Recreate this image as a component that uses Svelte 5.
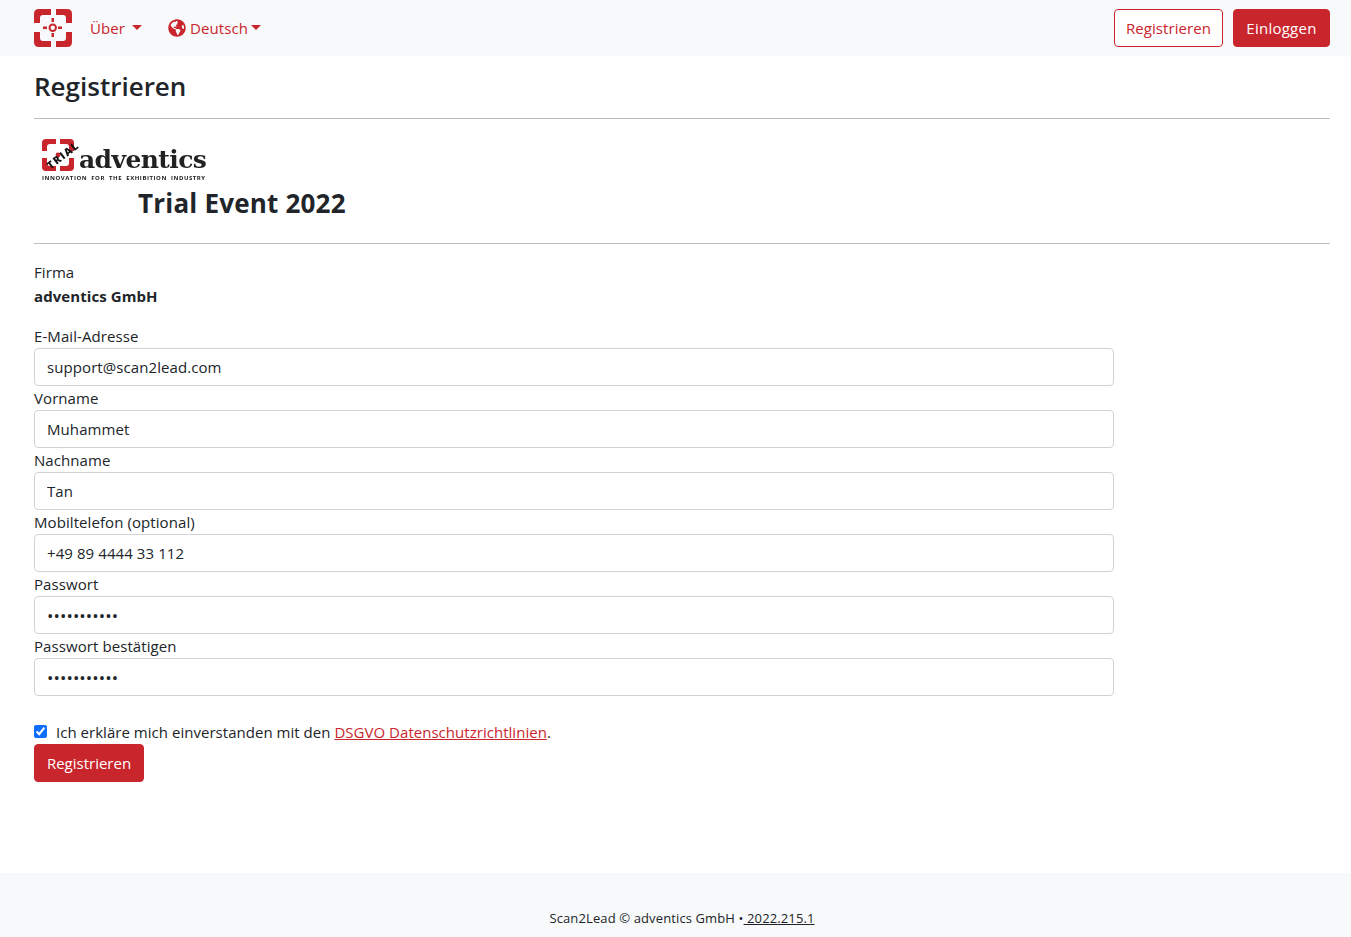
<script>
  const fields = [
    { label: 'E-Mail-Adresse', value: 'support@scan2lead.com', type: 'text' },
    { label: 'Vorname', value: 'Muhammet', type: 'text' },
    { label: 'Nachname', value: 'Tan', type: 'text' },
    { label: 'Mobiltelefon (optional)', value: '+49 89 4444 33 112', type: 'text' },
    { label: 'Passwort', value: 'password123', type: 'password' },
    { label: 'Passwort bestätigen', value: 'password123', type: 'password' }
  ];
</script>

<div class="page">
  <nav class="navbar">
    <div class="nav-left">
      <svg class="brand" viewBox="0 0 38 38" aria-hidden="true">
        <g fill="#c9252d">
          <path d="M5 0H17V6H9Q6 6 6 9V14H0V5Q0 0 5 0Z" />
          <path d="M22 0H33Q38 0 38 5V14H32V9Q32 6 29 6H22Z" />
          <path d="M0 23H6V29Q6 32 9 32H17V38H5Q0 38 0 33Z" />
          <path d="M32 23H38V33Q38 38 33 38H22V32H29Q32 32 32 29Z" />
          <rect x="17.5" y="9" width="2.5" height="4" />
          <rect x="17.5" y="24" width="2.5" height="4" />
          <rect x="9" y="17.5" width="4" height="2.5" />
          <rect x="24" y="17.5" width="4" height="2.5" />
        </g>
        <circle cx="18.75" cy="18.75" r="3.2" fill="none" stroke="#c9252d" stroke-width="2" />
      </svg>
      <a class="nav-link first" href="#a">Über<span class="caret wide"></span></a>
      <a class="nav-link lang" href="#b">
        <svg class="globe" viewBox="0 0 496 512" aria-hidden="true">
          <path fill="#c9252d" d="M248 8C111.03 8 0 119.03 0 256s111.03 248 248 248 248-111.03 248-248S384.97 8 248 8zm82.29 357.6c-3.9 3.88-7.99 7.95-11.31 11.28-2.99 3-5.1 6.7-6.17 10.71-1.51 5.66-2.73 11.38-4.77 16.87l-17.39 46.85c-13.76 3-28 4.69-42.65 4.69v-27.38c1.69-12.62-7.64-36.26-22.63-51.25-6-6-9.37-14.14-9.37-22.63v-32.01c0-11.64-6.27-22.34-16.46-27.97-14.37-7.95-34.81-19.06-48.81-26.11-11.48-5.78-22.1-13.14-31.65-21.75l-.8-.72a114.792 114.792 0 0 1-18.06-20.74c-9.38-13.77-24.66-36.42-34.59-51.14 20.47-45.5 57.36-82.04 103.2-101.89l24.01 12.01C203.48 89.74 216 82.01 216 70.11v-11.3c7.99-1.29 16.12-2.11 24.42-2.43l28.3 28.3c6.25 6.25 6.25 16.38 0 22.63L264 112l-10.34 10.34c-3.12 3.12-3.12 8.19 0 11.31l4.69 4.69c3.12 3.12 3.12 8.19 0 11.31l-8 8a8.008 8.008 0 0 1-5.66 2.34h-8.99c-2.08 0-4.08.81-5.58 2.27l-9.92 9.65a8.008 8.008 0 0 0-1.58 9.31l15.59 31.19c2.66 5.32-1.21 11.58-7.15 11.58h-5.64c-1.93 0-3.79-.7-5.24-1.96l-9.28-8.06a16.017 16.017 0 0 0-15.55-3.1l-31.17 10.39a11.95 11.95 0 0 0-8.17 11.34c0 4.53 2.56 8.66 6.61 10.69l11.08 5.54c9.41 4.71 19.79 7.16 30.31 7.16s22.59 27.29 32 32h66.75c8.49 0 16.62 3.37 22.63 9.37l13.69 13.69a30.503 30.503 0 0 1 8.93 21.57 46.536 46.536 0 0 1-13.72 32.98zM417 274.25c-5.79-1.45-10.84-5-14.15-9.97l-17.98-26.97a23.97 23.97 0 0 1 0-26.62l19.59-29.38c2.32-3.47 5.5-6.29 9.24-8.15l12.98-6.49C440.2 193.59 448 223.87 448 256c0 8.67-.74 17.16-1.82 25.54L417 274.25z" />
        </svg>
        Deutsch<span class="caret"></span>
      </a>
    </div>
    <div class="nav-right">
      <a class="btn outline" href="#c">Registrieren</a>
      <a class="btn solid login" href="#d">Einloggen</a>
    </div>
  </nav>

  <main class="content">
    <h1>Registrieren</h1>
    <hr class="rule-one" />

    <div class="event">
      <div class="logo">
        <svg class="logo-mark" viewBox="0 0 32 32" aria-hidden="true">
          <g fill="#c9252d">
            <path d="M4 0H14V5H8Q5 5 5 8V12H0V4Q0 0 4 0Z" />
            <path d="M18 0H28Q32 0 32 4V12H27V8Q27 5 24 5H18Z" />
            <path d="M0 19H5V24Q5 27 8 27H14V32H4Q0 32 0 28Z" />
            <path d="M27 19H32V28Q32 32 28 32H18V27H24Q27 27 27 24Z" />
          </g>
          <circle cx="16" cy="16" r="2.4" fill="#c9252d" />
        </svg>
        <span class="stamp">TRIAL</span>
        <span class="wordmark">adventics</span>
        <span class="tagline">INNOVATION FOR THE EXHIBITION INDUSTRY</span>
      </div>
      <h2>Trial Event 2022</h2>
    </div>
    <hr class="rule-two" />

    <div class="company">
      <div class="line">Firma</div>
      <div class="line strong">adventics GmbH</div>
    </div>

    <form class="form">
      {#each fields as f}
        <label class="field">
          <span class="line">{f.label}</span>
          <input class="input" class:secret={f.type === 'password'} type={f.type} value={f.value} />
        </label>
      {/each}
      <label class="consent">
        <input type="checkbox" checked />
        <span>Ich erkläre mich einverstanden mit den <a href="#e">DSGVO Datenschutzrichtlinien</a>.</span>
      </label>
      <button type="button" class="btn solid submit">Registrieren</button>
    </form>
  </main>

  <footer class="footer">
    <span>Scan2Lead © adventics GmbH •<a href="#f">&nbsp;2022.215.1</a></span>
  </footer>
</div>

<style>
  :global(body) {
    margin: 0;
    background: #fff;
  }
  .page {
    font-family: "Open Sans", "Noto Sans", sans-serif;
    font-size: 15px;
    line-height: 24px;
    letter-spacing: 0.08px;
    color: #212529;
    min-height: 937px;
    display: flex;
    flex-direction: column;
    box-sizing: border-box;
  }
  .navbar {
    height: 56px;
    background: #f8f9fa;
    display: flex;
    align-items: center;
    justify-content: space-between;
    padding: 0 21px 0 34px;
    flex-shrink: 0;
  }
  .nav-left, .nav-right {
    display: flex;
    align-items: center;
  }
  .brand {
    width: 38px;
    height: 38px;
    flex-shrink: 0;
  }
  .nav-link {
    color: #c9252d;
    text-decoration: none;
    display: flex;
    align-items: center;
  }
  .first {
    margin-left: 18px;
  }
  .lang {
    margin-left: 26px;
  }
  .globe {
    width: 18px;
    height: 18px;
    margin-right: 4px;
  }
  .caret {
    display: inline-block;
    margin-left: 3px;
    margin-top: -2px;
    border-top: 5px solid #c9252d;
    border-left: 5px solid transparent;
    border-right: 5px solid transparent;
  }
  .caret.wide {
    margin-left: 7px;
  }
  .btn {
    display: inline-block;
    box-sizing: border-box;
    height: 38px;
    padding: 0 12px;
    border: 1px solid #c9252d;
    border-radius: 4px;
    font: inherit;
    letter-spacing: inherit;
    line-height: 36px;
    text-decoration: none;
  }
  .outline {
    width: 109px;
    padding: 0;
    text-align: center;
    color: #c9252d;
    background: #fff;
    margin-right: 10px;
  }
  .solid {
    color: #fff;
    background: #c9252d;
  }
  .login {
    width: 97px;
    padding: 0;
    text-align: center;
    letter-spacing: 0.25px;
  }
  .content {
    flex: 1;
    padding: 0 21px 0 34px;
  }
  h1 {
    margin: 13px 0 0;
    font-size: 26px;
    line-height: 34px;
    font-weight: 600;
    letter-spacing: 0;
  }
  hr {
    border: 0;
    border-top: 1px solid #bdbdbd;
    margin: 0;
  }
  .rule-one {
    margin-top: 15px;
  }
  .event {
    height: 124px;
    box-sizing: border-box;
    padding-top: 20px;
  }
  .logo {
    position: relative;
    width: 172px;
    height: 46px;
    margin-left: 8px;
    color: #222;
    filter: blur(0.3px);
  }
  .logo-mark {
    position: absolute;
    left: 0;
    top: 0;
    width: 32px;
    height: 32px;
  }
  .stamp {
    position: absolute;
    left: 2px;
    top: 10px;
    font-size: 10.5px;
    line-height: 12px;
    font-weight: 800;
    letter-spacing: 1.4px;
    color: #111;
    transform: rotate(-38deg);
  }
  .wordmark {
    position: absolute;
    left: 37px;
    top: 4px;
    font-family: "DejaVu Serif", serif;
    font-weight: 700;
    font-size: 25px;
    line-height: 34px;
    letter-spacing: -0.6px;
    color: #222;
  }
  .tagline {
    position: absolute;
    left: 0;
    top: 34px;
    font-size: 6px;
    line-height: 10px;
    font-weight: 700;
    letter-spacing: 0.55px;
    white-space: nowrap;
    word-spacing: 2px;
  }
  h2 {
    margin: 1px 0 0 104px;
    font-size: 26px;
    line-height: 34px;
    font-weight: 700;
    letter-spacing: 0.2px;
  }
  .company {
    padding-top: 16px;
    padding-bottom: 16px;
  }
  .line {
    display: block;
  }
  .strong {
    font-weight: 700;
  }
  .form {
    width: 1080px;
    display: flex;
    flex-direction: column;
    align-items: flex-start;
  }
  .field {
    display: block;
    width: 100%;
  }
  .input {
    display: block;
    width: 100%;
    box-sizing: border-box;
    height: 38px;
    padding: 0 12px;
    border: 1px solid #ced4da;
    border-radius: 4px;
    font: inherit;
    letter-spacing: inherit;
    color: #212529;
    background: #fff;
  }
  .secret {
    font-size: 17px;
  }
  .consent {
    display: flex;
    align-items: center;
    margin-top: 24px;
    height: 24px;
    letter-spacing: 0.03px;
  }
  .consent input {
    width: 13px;
    height: 13px;
    margin: -2px 9px 0 0;
    accent-color: #0d6efd;
  }
  .consent a {
    color: #c9252d;
  }
  .submit {
    width: 110px;
    padding: 0;
    text-align: center;
    letter-spacing: 0;
    cursor: pointer;
  }
  .footer {
    height: 64px;
    background: #f8f9fa;
    box-sizing: border-box;
    padding-top: 33px;
    padding-left: 13px;
    text-align: center;
    font-size: 13px;
    letter-spacing: 0.12px;
    flex-shrink: 0;
  }
  .footer a {
    color: #212529;
  }
</style>
